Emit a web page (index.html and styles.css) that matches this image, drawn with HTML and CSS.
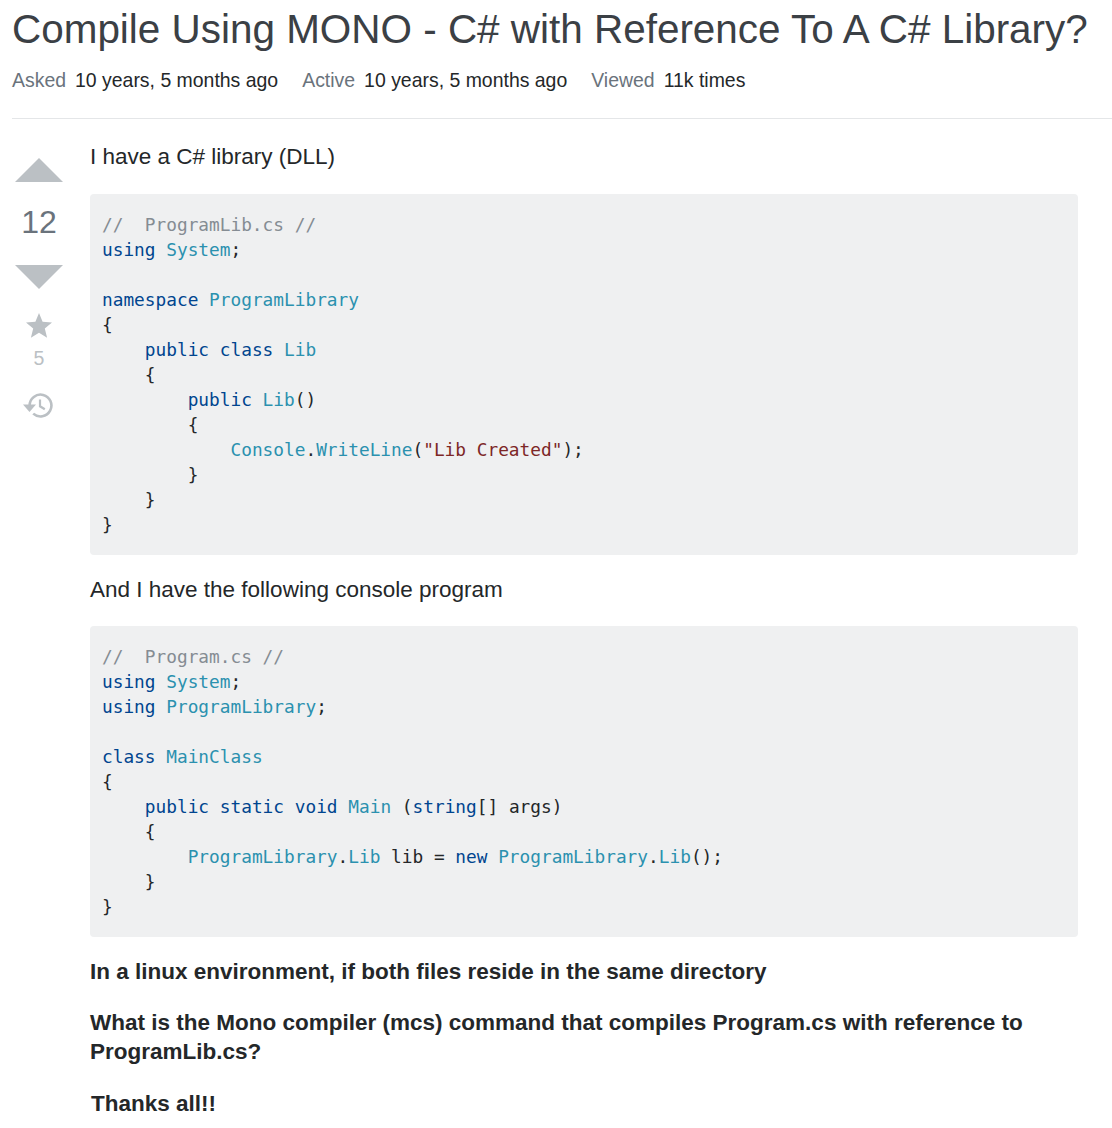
FILE: index.html
```html
<!DOCTYPE html>
<html lang="en">
<head>
<meta charset="utf-8">
<title>Compile Using MONO</title>
<link rel="stylesheet" href="styles.css">
</head>
<body>
<header class="head">
<h1 class="title">Compile Using MONO - C# with Reference To A C# Library?</h1>
<div class="meta">
<span class="meta-item"><span class="meta-label">Asked</span>10 years, 5 months ago</span>
<span class="meta-item"><span class="meta-label">Active</span>10 years, 5 months ago</span>
<span class="meta-item"><span class="meta-label">Viewed</span>11k times</span>
</div>
</header>
<div class="post">
<aside class="votes">
<div class="arrow-up"></div>
<div class="score">12</div>
<div class="arrow-down"></div>
<svg class="star" width="26" height="25" viewBox="0 0 26 25"><path fill="#bbc0c4" d="M13 0l3.6 8.8 9.4.7-7.2 6.1 2.3 9.2-8.1-5-8.1 5 2.3-9.2L0 9.5l9.4-.7z"/></svg>
<div class="fav">5</div>
<svg class="hist" width="30" height="25" viewBox="0 0 30 25"><path fill="none" stroke="#bbc0c4" stroke-width="2.6" d="M6.6 12.5a10.9 10.9 0 1 1 3.6 8.1"/><path fill="#bbc0c4" d="M0 11.5h13l-6.5 7.5z"/><path fill="none" stroke="#bbc0c4" stroke-width="2.2" d="M17 6.5v6.8l4.8 3"/></svg>
</aside>
<main class="body">
<p class="para intro">I have a C# library (DLL)</p>
<pre class="code"><code><span class="c">//  ProgramLib.cs //</span>
<span class="k">using</span> <span class="t">System</span>;

<span class="k">namespace</span> <span class="t">ProgramLibrary</span>
{
    <span class="k">public</span> <span class="k">class</span> <span class="t">Lib</span>
    {
        <span class="k">public</span> <span class="t">Lib</span>()
        {
            <span class="t">Console</span>.<span class="t">WriteLine</span>(<span class="s">"Lib Created"</span>);
        }
    }
}</code></pre>
<p class="para">And I have the following console program</p>
<pre class="code"><code><span class="c">//  Program.cs //</span>
<span class="k">using</span> <span class="t">System</span>;
<span class="k">using</span> <span class="t">ProgramLibrary</span>;

<span class="k">class</span> <span class="t">MainClass</span>
{
    <span class="k">public</span> <span class="k">static</span> <span class="k">void</span> <span class="t">Main</span> (<span class="k">string</span>[] args)
    {
        <span class="t">ProgramLibrary</span>.<span class="t">Lib</span> lib = <span class="k">new</span> <span class="t">ProgramLibrary</span>.<span class="t">Lib</span>();
    }
}</code></pre>
<p class="para strong">In a linux environment, if both files reside in the same directory</p>
<p class="para strong">What is the Mono compiler (mcs) command that compiles Program.cs with reference to ProgramLib.cs?</p>
<p class="para strong thanks">Thanks all!!</p>
</main>
</div>
</body>
</html>
```
FILE: styles.css
```css
* { box-sizing: border-box; }
html, body { margin: 0; padding: 0; }
body {
  background: #fff;
  color: #242729;
  font-family: "Liberation Sans", Arial, sans-serif;
  padding-left: 12px;
  overflow: hidden;
  height: 1128px;
}
.head {
  border-bottom: 1px solid #e4e6e8;
  padding-bottom: 25px;
  margin-bottom: 24px;
}
.title {
  margin: 0;
  font-size: 40.45px;
  font-weight: 400;
  line-height: 58px;
  color: #3b4045;
  white-space: nowrap;
}
.meta {
  display: flex;
  gap: 24px;
  font-size: 19.45px;
  line-height: 26px;
  margin-top: 9px;
}
.meta-label { color: #6a737c; margin-right: 9px; }
.post { display: flex; }
.votes {
  width: 54px;
  margin-right: 24px;
  display: flex;
  flex-direction: column;
  align-items: center;
  padding-top: 15px;
}
.arrow-up {
  width: 0; height: 0;
  border-left: 24px solid transparent;
  border-right: 24px solid transparent;
  border-bottom: 24px solid #bbc0c4;
}
.arrow-down {
  width: 0; height: 0;
  border-left: 24px solid transparent;
  border-right: 24px solid transparent;
  border-top: 24px solid #bbc0c4;
}
.score {
  font-size: 32px;
  line-height: 38px;
  color: #6a737c;
  margin: 21px 0 24px;
}
.star { margin-top: 24px; }
.fav { font-size: 19.5px; line-height: 24px; color: #bbc0c4; margin-top: 8px; }
.hist { margin: 23px 0 0 -2px; }
.body { width: 988px; }
.para {
  margin: 0 0 22px;
  font-size: 22.5px;
  line-height: 29px;
}
.intro { margin: -1px 0 23px; }
.code {
  margin: 0 0 20px;
  background: #eff0f1;
  border-radius: 4px;
  padding: 18px 12px;
  font-family: "DejaVu Sans Mono", monospace;
  font-size: 17.8px;
  line-height: 25px;
  color: #242729;
  overflow: hidden;
}
.c { color: #858c93; }
.k { color: #00458f; }
.t { color: #2b91af; }
.s { color: #7d2727; }
.strong { font-weight: 700; margin-bottom: 22px; }
.thanks { margin: 23px 0 0 1px; }
```
